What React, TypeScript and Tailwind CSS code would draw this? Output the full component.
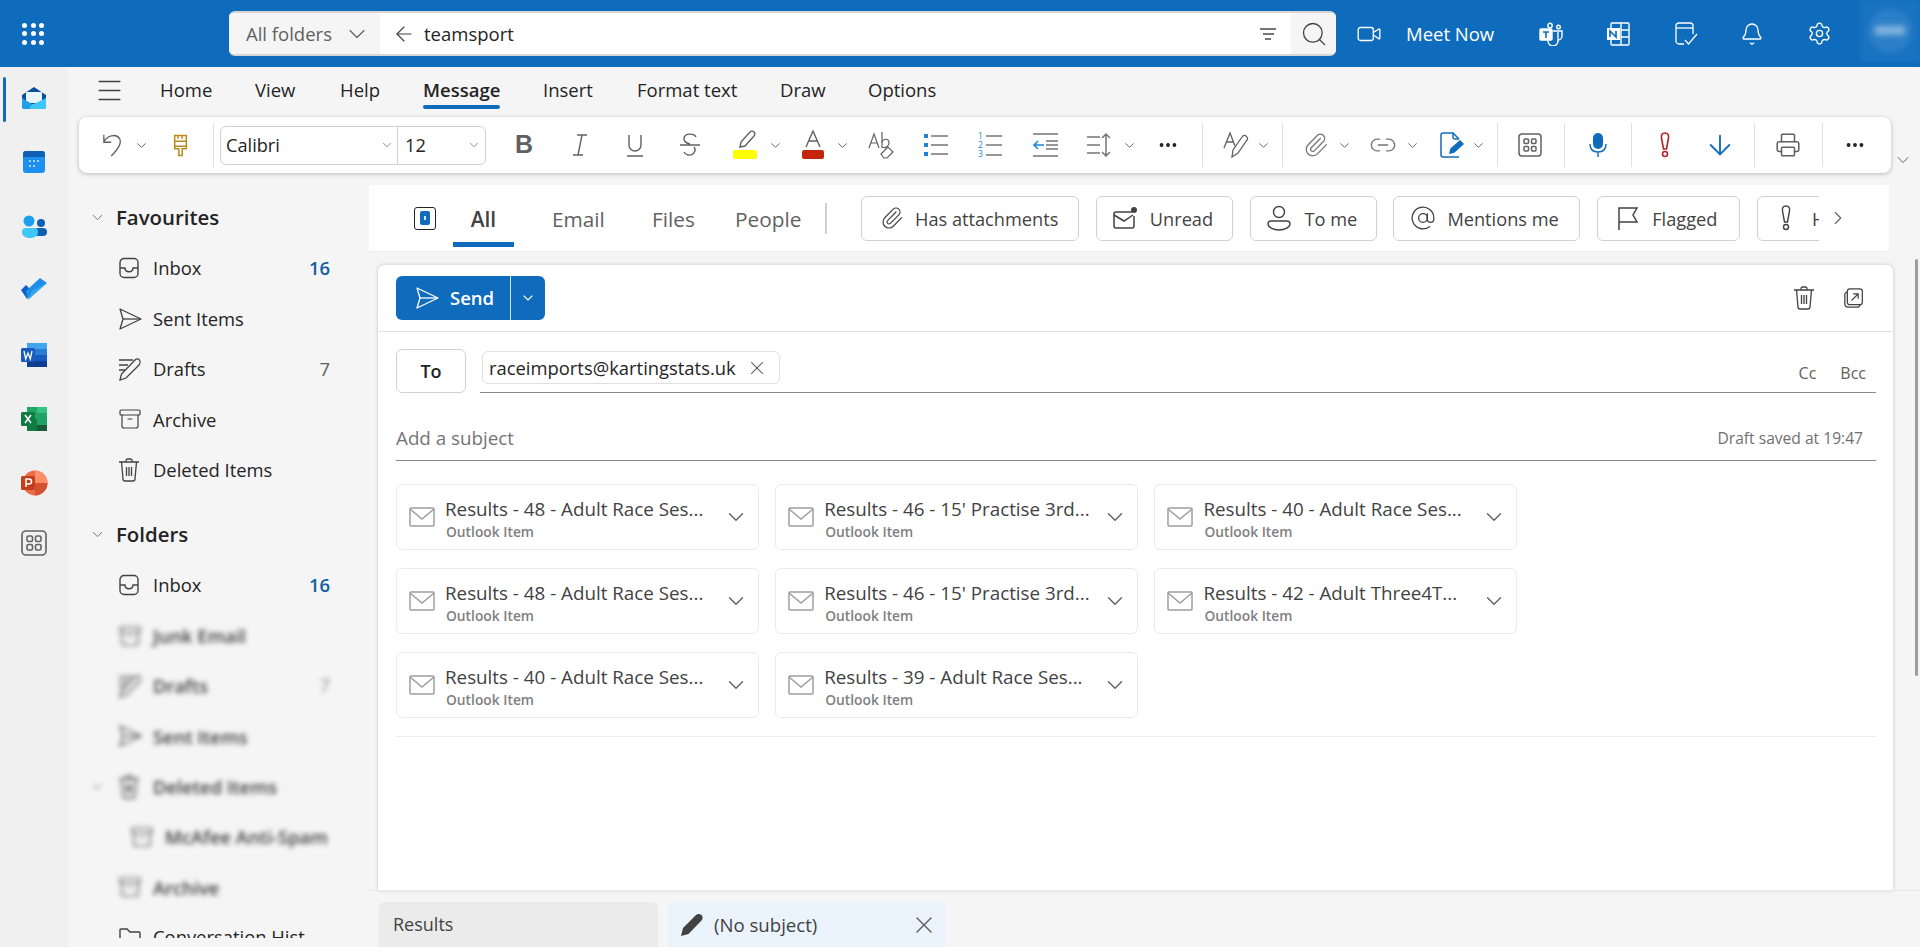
import React from "react";
import {
  Archive,
  ArrowDown,
  ArrowLeft,
  AtSign,
  Bell,
  ChevronDown,
  ChevronRight,
  Ellipsis,
  Link2,
  Menu,
  Paperclip,
  Printer,
  Search,
  Settings,
  Video,
  X,
} from "lucide-react";

const font = "font-['Open_Sans',sans-serif]";

const Chev = ({ className = "" }: { className?: string }) => (
  <div className={`w-4 flex justify-center items-center shrink-0 ${className}`}>
    <ChevronDown size={15} strokeWidth={1.3} className="text-[#424242]" />
  </div>
);

const Tool = ({ className = "", children }: { className?: string; children: React.ReactNode }) => (
  <div className={`w-[34px] h-9 flex justify-center items-center shrink-0 ${className}`}>{children}</div>
);

const Sep = ({ className = "" }: { className?: string }) => (
  <div className={`w-px h-[44px] bg-[#e0e0e0] shrink-0 ${className}`} />
);

const Chip = ({ className = "", icon, label }: { className?: string; icon: React.ReactNode; label: string }) => (
  <div className={`h-[45px] border border-[#d1d1d1] rounded-md flex items-center shrink-0 text-[18.2px] text-[#424242] ${className}`}>
    <div className="shrink-0 flex items-center">{icon}</div>
    <span className="whitespace-nowrap pt-[3px]">{label}</span>
  </div>
);

const NavRow = ({ icon, label, count, blue }: { icon: React.ReactNode; label: string; count?: string; blue?: boolean }) => (
  <div className="h-[50.4px] flex items-center pl-[50px] pr-[39px]">
    <div className="w-[35px] flex items-center">{icon}</div>
    <span className="text-[18.4px] text-[#242424] flex-1">{label}</span>
    {count && <span className={`text-[18.4px] ${blue ? "font-semibold text-[#115ea3]" : "text-[#616161]"}`}>{count}</span>}
  </div>
);

const BlurRow = ({ icon, label, indent, count, chevron }: { icon: React.ReactNode; label: string; indent?: boolean; count?: string; chevron?: boolean }) => (
  <div className={`h-[50.4px] flex items-center pr-[39px] blur-[2.5px] relative ${indent ? "pl-[62px]" : "pl-[50px]"}`}>
    {chevron && <ChevronDown size={14} className="absolute left-[22px] text-[#9a9a9a]" />}
    <div className="w-[35px] flex items-center">{icon}</div>
    <span className="text-[18.4px] font-semibold text-[#3a3a3a] flex-1 whitespace-nowrap">{label}</span>
    {count && <span className="text-[18px] text-[#888]">{count}</span>}
  </div>
);

const InboxIcon = () => (
  <svg width="22" height="22" viewBox="0 0 22 22" fill="none" stroke="#424242" strokeWidth="1.4">
    <rect x="2" y="1.500" width="18" height="19" rx="4" />
    <path d="M2 11h5c0 5 8 5 8 0h5" />
  </svg>
);

const SendIcon = ({ color = "#424242" }: { color?: string }) => (
  <svg width="24" height="24" viewBox="0 0 24 24" fill="none" stroke={color} strokeWidth="1.3" strokeLinejoin="round">
    <path d="M2 2l21 10L2 22l3-10z" />
    <path d="M5 12h18" />
  </svg>
);

const TrashIcon = () => (
  <svg width="22" height="24" viewBox="0 0 22 24" fill="none" stroke="#424242" strokeWidth="1.3">
    <path d="M1 4h20M8 4V2.500A1.500 1.500 0 0 1 9.500 1h3A1.500 1.500 0 0 1 14 2.500V4" />
    <path d="M3.500 4l1.500 17a2 2 0 0 0 2 2h8a2 2 0 0 0 2-2l1.500-17" />
    <path d="M8.500 9v9M11 9v9M13.500 9v9" />
  </svg>
);

const DraftIcon = () => (
  <svg width="24" height="24" viewBox="0 0 24 24" fill="none" stroke="#424242" strokeWidth="1.300">
    <path d="M1 3h14M1 8h9M1 13h6" />
    <path d="M2 23l1.500-6L17 3c1.500-1.500 3.500-1.500 4.500 0s1 3 0 4.500L8 21z" />
  </svg>
);

const ArchiveIcon = () => <Archive size={24} strokeWidth={1.200} className="text-[#424242]" />;

const Attachment = ({ title }: { title: string }) => (
  <div className="w-[363px] h-[66px] border border-[#ebebeb] rounded-md flex items-center pl-3 pr-[9px]">
    <svg width="26" height="20" viewBox="0 0 26 20" fill="none" stroke="#9e9e9e" strokeWidth="1.5" className="shrink-0">
      <rect x="1" y="1" width="24" height="18" rx="1" />
      <path d="M1 2l12 10L25 2" />
    </svg>
    <div className="ml-[10px] flex-1 min-w-0 flex flex-col mt-[4px]">
      <span className="text-[18.800px] leading-[24px] text-[#424242] whitespace-nowrap">{title}</span>
      <span className="text-[13.800px] leading-[18px] font-semibold text-[#808080] mt-[2px] ml-px">Outlook Item</span>
    </div>
    <ChevronDown size={26} strokeWidth={1.300} className="text-[#616161] shrink-0" />
  </div>
);

export default function App() {
  return (
    <div className={`w-[1920px] h-[947px] overflow-hidden bg-[#f5f5f5] flex flex-col ${font}`}>
      {/* top bar */}
      <header className="h-[67px] bg-[#0f6cbd] flex items-center relative shrink-0">
        <div className="w-[66px] flex justify-center">
          <div className="grid grid-cols-3 gap-[3.500px]">
            {Array.from({ length: 9 }).map((_, i) => (
              <div key={i} className="w-[5px] h-[5px] rounded-full bg-white" />
            ))}
          </div>
        </div>
        <div className="ml-[163px] w-[1107px] h-[45px] rounded-md border-y-2 border-[#d6d6d6] flex overflow-hidden bg-white shrink-0">
          <div className="w-[151px] bg-[#f5f5f5] flex items-center pl-[17px] text-[18.500px] text-[#616161]">
            <span className="w-[86px] whitespace-nowrap">All folders</span>
            <ChevronDown size={28} strokeWidth={1} className="ml-[11px] text-[#616161] shrink-0" />
          </div>
          <div className="flex-1 flex items-center pl-[12px]">
            <ArrowLeft size={24} strokeWidth={1.2} className="text-[#424242]" />
            <span className="ml-[8px] text-[18.500px] text-[#242424]">teamsport</span>
            <div className="ml-auto mr-[15px] flex flex-col items-center gap-[3px]">
              <div className="w-4 h-[2px] bg-[#757575]" />
              <div className="w-[11px] h-[2px] bg-[#757575]" />
              <div className="w-[6px] h-[2px] bg-[#757575]" />
            </div>
          </div>
          <div className="w-[45px] bg-[#f5f5f5] flex justify-center items-center">
            <Search size={28} strokeWidth={1.1} className="text-[#424242]" />
          </div>
        </div>
        <Video size={26} strokeWidth={1.2} className="ml-[20px] text-white shrink-0" />
        <span className="ml-[24px] w-[89px] whitespace-nowrap text-[18.500px] text-white">Meet Now</span>
        <div className="ml-[44px] w-6 h-6 shrink-0">
          <svg width="24" height="24" viewBox="0 0 24 24" fill="none" stroke="#fff" strokeWidth="1.4">
            <rect x="1" y="7" width="12" height="11" rx="1" fill="#fff" />
            <path d="M4 10h6M7 10v6" stroke="#0f6cbd" strokeWidth="1.6" />
            <circle cx="11" cy="3.500" r="2.200" />
            <circle cx="19.500" cy="5" r="1.800" />
            <path d="M14 9h9v5a4 4 0 0 1-4 4" />
            <path d="M9 18v1a5 5 0 0 0 10 0v-9" />
          </svg>
        </div>
        <div className="ml-[43px] w-6 h-6 shrink-0">
          <svg width="24" height="24" viewBox="0 0 24 24" fill="none" stroke="#fff" strokeWidth="1.400">
            <rect x="5" y="1" width="18" height="22" rx="1" />
            <path d="M15 1v22M15 8h8M15 15h8" />
            <rect x="1" y="6" width="13" height="12" fill="#fff" stroke="none" />
            <path d="M4 15V9l6 6V9" stroke="#0f6cbd" strokeWidth="1.700" />
          </svg>
        </div>
        <div className="ml-[44px] w-6 h-6 shrink-0">
          <svg width="24" height="24" viewBox="0 0 24 24" fill="none" stroke="#fff" strokeWidth="1.300">
            <path d="M10 22H5a3 3 0 0 1-3-3V4a3 3 0 0 1 3-3h11a3 3 0 0 1 3 3v8" />
            <path d="M2 6h17" />
            <path d="M11 18l3.500 4L23 12" />
          </svg>
        </div>
        <Bell size={24} strokeWidth={1.300} className="ml-[42px] text-white shrink-0" />
        <Settings size={25} strokeWidth={1.300} className="ml-[43px] text-white shrink-0" />
        <div className="absolute right-0 top-0 w-[60px] h-[61px] bg-[#1a73c1] blur-[2px] flex items-center justify-center">
          <div className="w-[44px] h-[44px] rounded-full bg-[#2b7ec8] flex items-center justify-center">
            <div className="w-[30px] h-[9px] bg-[#86b5de] blur-[2px]" />
          </div>
        </div>
      </header>

      <div className="flex-1 flex min-h-0">
        {/* app rail */}
        <aside className="w-[68px] bg-[#f0f0f0] shrink-0 flex flex-col items-center relative pt-[19px]">
          <div className="absolute left-[3px] top-[10px] w-[3px] h-[45px] rounded bg-[#0f6cbd]" />
          <div className="h-[24px] flex items-center">
            <svg width="26" height="24" viewBox="0 0 26 24">
              <path d="M13 1L25 9v11a3 3 0 0 1-3 3H4a3 3 0 0 1-3-3V9z" fill="#0a4f9e" />
              <rect x="5" y="6" width="16" height="11" rx="1" fill="#e9f4fc" />
              <path d="M1 12l10 6h8l6-6v8a3 3 0 0 1-3 3H4a3 3 0 0 1-3-3z" fill="#1f9fe8" />
              <path d="M9 23c0-4 3-5 6-6l10-5v8a3 3 0 0 1-3 3z" fill="#3ec6f5" />
            </svg>
          </div>
          <div className="mt-[40px] h-[24px] flex items-center">
            <svg width="24" height="24" viewBox="0 0 24 24">
              <rect x="1" y="1" width="22" height="22" rx="3" fill="#1d8ff0" />
              <path d="M1 7V4a3 3 0 0 1 3-3h16a3 3 0 0 1 3 3v3z" fill="#0f5fb5" />
              <g fill="#cfe7ff">
                <circle cx="8" cy="11" r="1" /><circle cx="12" cy="11" r="1" /><circle cx="16" cy="11" r="1" />
                <circle cx="8" cy="16" r="1" /><circle cx="12" cy="16" r="1" />
              </g>
            </svg>
          </div>
          <div className="mt-[41px] h-[24px] flex items-center">
            <svg width="26" height="24" viewBox="0 0 26 24">
              <circle cx="8" cy="6" r="5.500" fill="#1da0ec" />
              <circle cx="20" cy="8" r="4" fill="#0f5fb5" />
              <rect x="13" y="13" width="13" height="8" rx="4" fill="#0f5fb5" />
              <path d="M1 17a4 4 0 0 1 4-4h8a4 4 0 0 1 4 4c0 4-4 6-8 6s-8-2-8-6z" fill="#3ec6f5" />
            </svg>
          </div>
          <div className="mt-[38px] h-[24px] flex items-center">
            <svg width="28" height="24" viewBox="0 0 28 24">
              <path d="M1 13l5-5 6 6-5 8z" fill="#1160c9" />
              <path d="M7 22l-1-8L20 1l7 5z" fill="#1c8fe6" />
              <path d="M12 14L27 6 8 23z" fill="#3aa5ee" />
            </svg>
          </div>
          <div className="mt-[42px] h-[24px] flex items-center">
            <svg width="28" height="26" viewBox="0 0 28 26">
              <rect x="7" y="1" width="20" height="24" rx="1.500" fill="#2b7cd3" />
              <rect x="7" y="1" width="20" height="6" fill="#41a5ee" />
              <rect x="7" y="13" width="20" height="6" fill="#185abd" />
              <rect x="7" y="19" width="20" height="6" fill="#103f91" />
              <rect x="1" y="6" width="14" height="14" rx="1.500" fill="#185abd" />
              <path d="M4 9l1.700 8L8 11l2.300 6L12 9" fill="none" stroke="#fff" strokeWidth="1.300" />
            </svg>
          </div>
          <div className="mt-[40px] h-[24px] flex items-center">
            <svg width="28" height="26" viewBox="0 0 28 26">
              <rect x="7" y="1" width="20" height="24" rx="1.500" fill="#21a366" />
              <rect x="17" y="1" width="10" height="6" fill="#33c481" />
              <rect x="7" y="1" width="10" height="6" fill="#21a366" />
              <rect x="7" y="13" width="10" height="12" fill="#107c41" />
              <rect x="17" y="19" width="10" height="6" fill="#185c37" />
              <rect x="1" y="6" width="14" height="14" rx="1.500" fill="#107c41" />
              <path d="M5 9l6 8M11 9l-6 8" fill="none" stroke="#fff" strokeWidth="1.500" />
            </svg>
          </div>
          <div className="mt-[40px] h-[24px] flex items-center">
            <svg width="28" height="26" viewBox="0 0 28 26">
              <circle cx="15" cy="13" r="12.500" fill="#ed6c47" />
              <path d="M15 .5A12.500 12.500 0 0 1 27.500 13H15z" fill="#ff8f6b" />
              <path d="M15 13h12.500A12.500 12.500 0 0 1 15 25.500z" fill="#d35230" />
              <rect x="1" y="6" width="14" height="14" rx="1.500" fill="#c43e1c" />
              <path d="M6 17V9h3a2.500 2.500 0 0 1 0 5H6" fill="none" stroke="#fff" strokeWidth="1.500" />
            </svg>
          </div>
          <div className="mt-[36px] h-[24px] flex items-center">
            <svg width="26" height="26" viewBox="0 0 26 26" fill="none" stroke="#616161" strokeWidth="1.600">
              <rect x="1" y="1" width="24" height="24" rx="4" />
              <rect x="6" y="6" width="5.500" height="5.500" rx="1.500" />
              <rect x="14.500" y="6" width="5.500" height="5.500" rx="1.500" />
              <rect x="6" y="14.500" width="5.500" height="5.500" rx="1.500" />
              <rect x="14.500" y="14.500" width="5.500" height="5.500" rx="1.500" />
            </svg>
          </div>
        </aside>

        <div className="flex-1 min-w-0 flex flex-col relative">
          {/* tab row */}
          <nav className="h-[50px] shrink-0 flex items-center text-[18.500px] text-[#242424] pb-[4px] whitespace-nowrap">
            <Menu size={31} strokeWidth={1.100} className="ml-[26px] text-[#424242] shrink-0" />
            <span className="ml-[35px] w-[95px]">Home</span>
            <span className="w-[85px]">View</span>
            <span className="w-[83px]">Help</span>
            <span className="w-[77px] font-semibold relative">
              Message
              <div className="absolute left-0 right-0 top-[29px] h-[4px] rounded bg-[#0f6cbd]" />
            </span>
            <span className="ml-[43px] w-[48px]">Insert</span>
            <span className="ml-[46px] w-[99px]">Format text</span>
            <span className="ml-[44px] w-[45px]">Draw</span>
            <span className="ml-[43px]">Options</span>
          </nav>

          {/* ribbon */}
          <div className="flex items-start shrink-0">
            <div className="ml-[11px] w-[1812px] h-[56px] bg-white rounded-lg shadow-[0_1px_4px_rgba(0,0,0,0.25)] flex items-center">
              <Tool className="ml-[18px]">
                <svg width="24" height="26" viewBox="0 0 26 28" fill="none" stroke="#616161" strokeWidth="1.400">
                  <path d="M2 3v8h8M2 11c3-7 13-10 17-4 3 5-1 11-9 19" />
                </svg>
              </Tool>
              <Chev className="ml-[2px]" />
              <Tool className="ml-[14px]">
                <svg width="15" height="23" viewBox="0 0 18 26" fill="none" stroke="#b88a1c" strokeWidth="1.800">
                  <path d="M2 1h14v13H2zM2 8h14M6 1v4M11 1v4M2 14h14v3h-5v8H7v-8H2z" />
                </svg>
              </Tool>
              <Sep className="ml-[16px]" />
              <div className="ml-[6px] w-[266px] h-[39px] border border-[#d1d1d1] rounded-md flex items-center text-[18.200px] text-[#242424] shrink-0">
                <div className="w-[177px] h-full flex items-center pl-[5px] border-r border-[#d1d1d1]">
                  <span className="flex-1 pt-px">Calibri</span>
                  <ChevronDown size={14} strokeWidth={1.200} className="mr-[3px] text-[#616161]" />
                </div>
                <div className="flex-1 flex items-center pl-[7px]">
                  <span className="flex-1 pt-px">12</span>
                  <ChevronDown size={14} strokeWidth={1.200} className="mr-[4px] text-[#616161]" />
                </div>
              </div>
              <Tool className="ml-[21px] text-[25px] font-bold text-[#616161] font-['Liberation_Sans']">B</Tool>
              <Tool className="ml-[22px]">
                <svg width="18" height="24" viewBox="0 0 18 24" fill="none" stroke="#616161" strokeWidth="1.400">
                  <path d="M6 2h10M2 22h10M11 2L7 22" />
                </svg>
              </Tool>
              <Tool className="ml-[21px]">
                <svg width="20" height="24" viewBox="0 0 20 24" fill="none" stroke="#616161" strokeWidth="1.400">
                  <path d="M4 2v10a6 6 0 0 0 12 0V2M2 23h16" />
                </svg>
              </Tool>
              <Tool className="ml-[21px]">
                <svg width="22" height="26" viewBox="0 0 22 26" fill="none" stroke="#616161" strokeWidth="1.400">
                  <path d="M17 5c-2-4-11-4-12 1-.5 3 2 5 6 6M15 15c3 4-1 9-6 8-2-.5-3-1-4-3M1 13h20" />
                </svg>
              </Tool>
              <Tool className="ml-[21px]">
                <svg width="26" height="30" viewBox="0 0 26 30" fill="none">
                  <path d="M8 17l1-5 9-10c1-1 3-1 4 0s1 3 0 4l-9 10z" stroke="#616161" strokeWidth="1.400" />
                  <rect x="1" y="20" width="24" height="9" rx="2" fill="#ffff00" />
                </svg>
              </Tool>
              <Chev className="ml-[5px]" />
              <Tool className="ml-[13px]">
                <svg width="24" height="30" viewBox="0 0 24 30">
                  <path d="M5 17L12 1l7 16M7.500 11h9" fill="none" stroke="#616161" strokeWidth="1.400" />
                  <rect x="1" y="20" width="22" height="9" rx="2" fill="#c4250f" />
                </svg>
              </Tool>
              <Chev className="ml-[4px]" />
              <Tool className="ml-[14px]">
                <svg width="26" height="28" viewBox="0 0 26 28" fill="none" stroke="#616161" strokeWidth="1.200">
                  <path d="M1 17L6 3l5 14M3 12h6M14 1v16M14 12c1-5 7-5 7 0 0 3-4 6-7 4" />
                  <path d="M13 23l7-7 5 5-6 6h-3z" />
                </svg>
              </Tool>
              <Tool className="ml-[21px]">
                <svg width="26" height="26" viewBox="0 0 26 26">
                  <g fill="#1a86d8">
                    <rect x="1" y="2" width="4" height="4" />
                    <rect x="1" y="11" width="4" height="4" />
                    <rect x="1" y="20" width="4" height="4" />
                  </g>
                  <path d="M8 4h17M8 13h17M8 22h17" stroke="#757575" strokeWidth="1.500" />
                </svg>
              </Tool>
              <Tool className="ml-[20px]">
                <svg width="26" height="28" viewBox="0 0 26 28">
                  <g fill="#1a86d8" fontSize="8.500" fontFamily="Open Sans">
                    <text x="1" y="8">1</text>
                    <text x="1" y="17">2</text>
                    <text x="1" y="26">3</text>
                  </g>
                  <path d="M9 5h16M9 14h16M9 24h16" stroke="#757575" strokeWidth="1.500" />
                </svg>
              </Tool>
              <Tool className="ml-[21px]">
                <svg width="26" height="26" viewBox="0 0 26 26" fill="none" strokeWidth="1.500">
                  <path d="M1 2h25M14 9h12M14 13h12M14 17h12M1 24h25" stroke="#757575" />
                  <path d="M12 13H2M6 9l-4 4 4 4" stroke="#1a86d8" />
                </svg>
              </Tool>
              <Tool className="ml-[20px]">
                <svg width="26" height="26" viewBox="0 0 26 26" fill="none" stroke="#757575" strokeWidth="1.500">
                  <path d="M1 5h13M1 13h13M1 21h13M20 2v22M16 6l4-4 4 4M16 20l4 4 4-4" />
                </svg>
              </Tool>
              <Chev className="ml-[5px]" />
              <Tool className="ml-[14px]">
                <Ellipsis size={22} strokeWidth={2.200} className="text-[#242424]" />
              </Tool>
              <Sep className="ml-[17px]" />
              <Tool className="ml-[16px]">
                <svg width="26" height="28" viewBox="0 0 26 28" fill="none" stroke="#616161" strokeWidth="1.300">
                  <path d="M1 17L7 2l5 13M3 11h7" />
                  <path d="M9 26l1-7 9-13c1-2 3-2 4-1s2 3 1 4l-9 13z" />
                </svg>
              </Tool>
              <Chev className="ml-[2px]" />
              <Sep className="ml-[11px]" />
              <Tool className="ml-[16px]">
                <Paperclip size={26} strokeWidth={1.200} className="text-[#757575]" />
              </Tool>
              <Chev className="ml-[3px]" />
              <Tool className="ml-[14px]">
                <Link2 size={28} strokeWidth={1.200} className="text-[#757575]" />
              </Tool>
              <Chev className="ml-[4px]" />
              <Tool className="ml-[14px]">
                <svg width="26" height="26" viewBox="0 0 26 26" fill="none" stroke="#0f6cbd" strokeWidth="1.500">
                  <path d="M21 7L15 1H5a2 2 0 0 0-2 2v20a2 2 0 0 0 2 2h16" />
                  <path d="M15 1v4a2 2 0 0 0 2 2h4" />
                  <path d="M12 21l1-4 9-8 3 3-9 8z" fill="#0f6cbd" />
                </svg>
              </Tool>
              <Chev className="ml-[2px]" />
              <Sep className="ml-[11px]" />
              <Tool className="ml-[15px]">
                <svg width="24" height="24" viewBox="0 0 24 24" fill="none" stroke="#616161" strokeWidth="1.500">
                  <rect x="1" y="1" width="22" height="22" rx="3" />
                  <rect x="6" y="6" width="4.500" height="4.500" rx="1" />
                  <rect x="13.500" y="6" width="4.500" height="4.500" rx="1" />
                  <rect x="6" y="13.500" width="4.500" height="4.500" rx="1" />
                  <rect x="13.500" y="13.500" width="4.500" height="4.500" rx="1" />
                </svg>
              </Tool>
              <Sep className="ml-[17px]" />
              <Tool className="ml-[16px]">
                <svg width="22" height="26" viewBox="0 0 22 26" fill="none">
                  <rect x="6" y="1" width="10" height="16" rx="5" fill="#0f6cbd" />
                  <path d="M3 12c0 5 3 8 8 8s8-3 8-8M11 20v5" stroke="#0f6cbd" strokeWidth="1.400" />
                </svg>
              </Tool>
              <Sep className="ml-[16px]" />
              <Tool className="ml-[16px]">
                <svg width="12" height="26" viewBox="0 0 12 26" fill="none" stroke="#b3202a" strokeWidth="1.600">
                  <path d="M6 1c-3 0-4 2-3.500 5L4.500 17h3l2-11C10 3 9 1 6 1z" />
                  <circle cx="6" cy="22" r="2.500" />
                </svg>
              </Tool>
              <Tool className="ml-[21px]">
                <ArrowDown size={32} strokeWidth={1.400} className="text-[#0f6cbd]" />
              </Tool>
              <Sep className="ml-[17px]" />
              <Tool className="ml-[16px]">
                <Printer size={26} strokeWidth={1.400} className="text-[#616161]" />
              </Tool>
              <Sep className="ml-[17px]" />
              <Tool className="ml-[15px]">
                <Ellipsis size={22} strokeWidth={2.200} className="text-[#242424]" />
              </Tool>
            </div>
            <ChevronDown size={20} strokeWidth={1.200} className="ml-[2px] mt-[33px] text-[#616161]" />
          </div>

          {/* folders + reading area */}
          <div className="flex-1 flex min-h-0 mt-[12px]">
            <div className="w-[301px] shrink-0 overflow-hidden -mt-[12px] h-[765px] relative pt-[19px]">
              <div className="h-[50px] flex items-center pl-[21px]">
                <ChevronDown size={17} strokeWidth={1.200} className="text-[#616161]" />
                <span className="ml-[10px] text-[20.400px] font-semibold text-[#242424]">Favourites</span>
              </div>
              <div className="pt-px" />
              <NavRow icon={<InboxIcon />} label="Inbox" count="16" blue />
              <NavRow icon={<SendIcon />} label="Sent Items" />
              <NavRow icon={<DraftIcon />} label="Drafts" count="7" />
              <NavRow icon={<ArchiveIcon />} label="Archive" />
              <NavRow icon={<TrashIcon />} label="Deleted Items" />
              <div className="h-[51px] mt-[14px] flex items-center pl-[21px]">
                <ChevronDown size={17} strokeWidth={1.200} className="text-[#616161]" />
                <span className="ml-[10px] text-[20.400px] font-semibold text-[#242424]">Folders</span>
              </div>
              <NavRow icon={<InboxIcon />} label="Inbox" count="16" blue />
              <BlurRow icon={<ArchiveIcon />} label="Junk Email" />
              <BlurRow icon={<DraftIcon />} label="Drafts" count="7" />
              <BlurRow icon={<SendIcon />} label="Sent Items" />
              <BlurRow icon={<TrashIcon />} label="Deleted Items" chevron />
              <BlurRow icon={<ArchiveIcon />} label="McAfee Anti-Spam" indent />
              <BlurRow icon={<ArchiveIcon />} label="Archive" />
              <div className="h-[28px] pt-[11px] pl-[50px] flex">
                <div className="w-[35px] pt-[3px]">
                  <svg width="24" height="22" viewBox="0 0 24 22" fill="none" stroke="#424242" strokeWidth="1.400">
                    <path d="M2 20V3a1 1 0 0 1 1-1h6l3 3h9a1 1 0 0 1 1 1v14" />
                  </svg>
                </div>
                <span className="text-[18.400px] leading-[26px] text-[#242424] whitespace-nowrap">Conversation Hist</span>
              </div>
            </div>

            <div className="flex-1 min-w-0 flex flex-col">
              {/* search filters */}
              <div className="h-[67px] w-[1520px] bg-white border-b border-[#ededed] flex items-center shrink-0 relative whitespace-nowrap">
                <div className="ml-[45px] w-[22px] h-[23px] border border-[#242424] rounded-[3px] flex items-center justify-center">
                  <div className="w-[10px] h-[14px] rounded-[2px] bg-[#0f6cbd] flex items-center justify-center">
                    <div className="w-[2px] h-[4px] bg-[#cfe7ff]" />
                  </div>
                </div>
                <div className="ml-[17px] w-[61px] h-full flex items-center justify-center relative text-[20.800px] font-semibold text-[#424242] pt-[4px]">
                  All
                  <div className="absolute left-0 right-0 top-[57px] h-[5px] bg-[#0f6cbd]" />
                </div>
                <span className="ml-[38px] w-[54px] text-[20.800px] text-[#616161] pt-[4px]">Email</span>
                <span className="ml-[46px] w-[43px] text-[20.800px] text-[#616161] pt-[4px]">Files</span>
                <span className="ml-[40px] w-[66px] text-[20.800px] text-[#616161] pt-[4px]">People</span>
                <div className="ml-[24px] w-[2px] h-[31px] bg-[#d1d1d1]" />
                <div className="ml-[34px] w-[958px] flex gap-[16.800px] overflow-hidden shrink-0">
                  <Chip
                    className="w-[218px] pl-[18px]"
                    label="Has attachments"
                    icon={<Paperclip size={24} strokeWidth={1.200} className="mr-[11px] text-[#424242]" />}
                  />
                  <Chip
                    className="w-[137px] pl-4"
                    label="Unread"
                    icon={
                      <svg width="24" height="22" viewBox="0 0 24 22" fill="none" stroke="#424242" strokeWidth="1.500" className="mr-[13px]">
                        <path d="M19 5H3a2 2 0 0 0-2 2v12a2 2 0 0 0 2 2h16a2 2 0 0 0 2-2V9" />
                        <path d="M1 8l10 6 9-6" />
                        <circle cx="21" cy="3" r="3" fill="#424242" stroke="none" />
                      </svg>
                    }
                  />
                  <Chip
                    className="w-[127px] pl-[16px]"
                    label="To me"
                    icon={
                      <svg width="24" height="26" viewBox="0 0 24 26" fill="none" stroke="#424242" strokeWidth="1.400" className="mr-[14px]">
                        <circle cx="12" cy="7" r="5.500" />
                        <path d="M4 16h16a3 3 0 0 1 3 3c0 3-5 6-11 6S1 22 1 19a3 3 0 0 1 3-3z" />
                      </svg>
                    }
                  />
                  <Chip
                    className="w-[187px] pl-[16px]"
                    label="Mentions me"
                    icon={<AtSign size={26} strokeWidth={1.200} className="mr-[11px] text-[#424242]" />}
                  />
                  <Chip
                    className="w-[143px] pl-[19px]"
                    label="Flagged"
                    icon={
                      <svg width="22" height="24" viewBox="0 0 22 24" fill="none" stroke="#424242" strokeWidth="1.500" className="mr-[13px]">
                        <path d="M2 24V2h18l-4 7 4 7H2" />
                      </svg>
                    }
                  />
                  <Chip
                    className="w-[170px] pl-[21px]"
                    label="High importance"
                    icon={
                      <svg width="14" height="26" viewBox="0 0 14 26" fill="none" stroke="#424242" strokeWidth="1.400" className="mr-[19px]">
                        <path d="M7 1C4 1 3 3 3.500 6L5.500 17h3l2-11C11 3 10 1 7 1z" />
                        <circle cx="7" cy="22" r="2.500" />
                      </svg>
                    }
                  />
                </div>
                <ChevronRight size={22} strokeWidth={1.200} className="ml-[8px] text-[#616161] shrink-0" />
              </div>

              {/* compose */}
              <div className="ml-[9px] mt-[13px] w-[1515px] h-[625px] bg-white rounded-t-md shadow-[0_0_4px_rgba(0,0,0,0.2)] flex flex-col shrink-0">
                <div className="h-[67px] border-b border-[#e0e0e0] flex items-center pl-[18px] pr-[29px] shrink-0">
                  <div className="flex h-[44px] w-[149px] bg-[#0f6cbd] rounded-md text-white">
                    <div className="w-[115px] flex items-center pl-[19px] border-r border-white/80">
                      <SendIcon color="#ffffff" />
                      <span className="ml-[11px] text-[18.500px] font-semibold">Send</span>
                    </div>
                    <div className="flex-1 flex items-center justify-center">
                      <ChevronDown size={16} strokeWidth={1.600} />
                    </div>
                  </div>
                  <div className="ml-auto">
                    <TrashIcon />
                  </div>
                  <div className="ml-[29px] w-5 h-5">
                    <svg width="20" height="20" viewBox="0 0 24 24" fill="none" stroke="#424242" strokeWidth="1.500">
                      <rect x="4" y="1" width="18" height="19" rx="3" />
                      <path d="M4 5a3 3 0 0 0-3 3v11a4 4 0 0 0 4 4h11a3 3 0 0 0 3-3" />
                      <path d="M9 15l8-8M11 7h6v6" />
                    </svg>
                  </div>
                </div>
                <div className="pl-[18px] pr-[17px] shrink-0">
                  <div className="flex items-start pt-[17px] h-[62px]">
                    <div className="w-[70px] h-[44px] border border-[#d1d1d1] rounded-md flex items-center justify-center text-[18px] font-semibold text-[#242424] shrink-0">
                      To
                    </div>
                    <div className="ml-[14px] flex-1 h-[45px] -mt-[1px] border-b border-[#8a8a8a] flex items-start relative pl-[2px]">
                      <div className="mt-[3px] w-[298px] h-[33px] border border-[#e0e0e0] rounded-md flex items-center pl-[6px] text-[18.400px] text-[#242424]">
                        <span className="whitespace-nowrap">raceimports@kartingstats.uk</span>
                        <X size={22} strokeWidth={1.100} className="ml-auto mr-[11px] text-[#424242] shrink-0" />
                      </div>
                      <span className="ml-auto mt-[13px] text-[16px] text-[#616161]">Cc</span>
                      <span className="ml-[24px] mr-[10px] mt-[13px] text-[16px] text-[#616161]">Bcc</span>
                    </div>
                  </div>
                  <div className="h-[67px] border-b border-[#8a8a8a] flex items-center pt-[23px]">
                    <span className="text-[18.800px] text-[#757575]">Add a subject</span>
                    <span className="ml-auto mr-[13px] text-[15.600px] text-[#707070]">Draft saved at 19:47</span>
                  </div>
                  <div className="pt-[23px] pb-[18px] border-b border-[#ededed] flex flex-col gap-[18px]">
                    <div className="flex gap-[16.200px]">
                      <Attachment title="Results - 48 - Adult Race Ses..." />
                      <Attachment title="Results - 46 - 15' Practise 3rd..." />
                      <Attachment title="Results - 40 - Adult Race Ses..." />
                    </div>
                    <div className="flex gap-[16.200px]">
                      <Attachment title="Results - 48 - Adult Race Ses..." />
                      <Attachment title="Results - 46 - 15' Practise 3rd..." />
                      <Attachment title="Results - 42 - Adult Three4T..." />
                    </div>
                    <div className="flex gap-[16.200px]">
                      <Attachment title="Results - 40 - Adult Race Ses..." />
                      <Attachment title="Results - 39 - Adult Race Ses..." />
                    </div>
                  </div>
                </div>
              </div>

              {/* open item tabs */}
              <div className="h-[57px] border-t border-[#e8e8e8] -ml-[1px] flex gap-[9px] pt-[11px] pl-[11px] shrink-0">
                <div className="w-[279px] h-[45px] bg-[#ebebeb] rounded-t-md flex items-center pl-[14px] text-[18px] text-[#424242]">
                  Results
                </div>
                <div className="w-[279px] h-[45px] bg-[#ebf3fc] rounded-t-md flex items-center pl-[13px] text-[18.600px] text-[#424242]">
                  <svg width="24" height="24" viewBox="0 0 24 24" fill="#424242" className="shrink-0">
                    <path d="M1 23l2-8L16 2c1.500-1.500 4-1.500 5.500 0s1.500 4 0 5.500L8.500 21z" />
                  </svg>
                  <span className="ml-[10px]">(No subject)</span>
                  <X size={28} strokeWidth={1.200} className="ml-auto mr-[8px] text-[#616161]" />
                </div>
              </div>
            </div>
          </div>

          {/* scrollbar */}
          <div className="absolute right-[2px] top-[192px] w-[3px] h-[417px] rounded bg-[#9e9e9e]" />
        </div>
      </div>
    </div>
  );
}
